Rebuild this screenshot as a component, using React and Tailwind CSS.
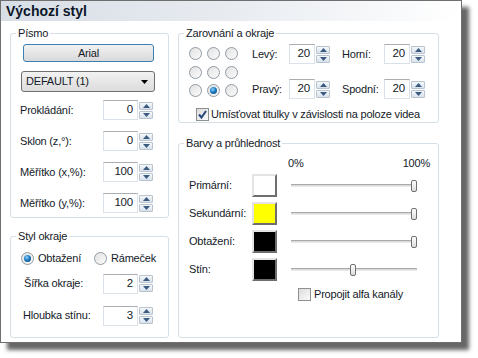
import React from "react";

const Group = ({ label, className, children }) => (
  <div className={`relative border border-[#d5dfe5] rounded-[3px] ${className}`}>
    <span className="absolute left-[5px] -top-[7px] px-[2px] bg-white leading-[13px]">{label}</span>
    {children}
  </div>
);

const ArrowBtn = ({ up }) => (
  <div className="h-[8px] w-[14px] border border-[#b9c3ce] rounded-[1px] bg-gradient-to-b from-[#f4f8fb] to-[#d8e2ec] flex items-center justify-center">
    <svg width="7" height="4" viewBox="0 0 7 4">
      {up ? <path d="M0 4 L3.5 0 L7 4 Z" fill="#3b5a80" /> : <path d="M0 0 L3.5 4 L7 0 Z" fill="#3b5a80" />}
    </svg>
  </div>
);

const Spinner = ({ value, fieldClass }) => (
  <div className="flex h-[20px]">
    <div className={`${fieldClass} h-full border border-[#dbe1e8] border-t-[#abadb3] bg-white flex items-center justify-end pr-[4px] text-[11.5px]`}>
      {value}
    </div>
    <div className="flex flex-col justify-center gap-[1px] ml-[1px]">
      <ArrowBtn up />
      <ArrowBtn />
    </div>
  </div>
);

const Radio = ({ checked }) => (
  <div className="w-[13px] h-[13px] rounded-full border border-[#8f9aa4] bg-gradient-to-br from-[#e2e2e2] to-[#fbfbfb] flex items-center justify-center shrink-0">
    {checked && (
      <div className="w-[7px] h-[7px] rounded-full bg-[radial-gradient(circle_at_40%_35%,#8fd3ff_0%,#1b7bc0_45%,#0a3d78_100%)]" />
    )}
  </div>
);

const Checkbox = ({ checked }) => (
  <div className="w-[13px] h-[13px] border border-[#8e8f8f] bg-gradient-to-br from-[#dcdcdc] to-[#fbfbfb] flex items-center justify-center shrink-0">
    {checked && (
      <svg width="9" height="9" viewBox="0 0 9 9">
        <path d="M1 4.5 L3.5 7.5 L8 1" stroke="#25467c" strokeWidth="2" fill="none" />
      </svg>
    )}
  </div>
);

const Swatch = ({ color }) => (
  <div
    className={`w-[25px] h-[23px] border-2 border-t-[#e4e4e4] border-l-[#e4e4e4] border-r-[#6e6e6e] border-b-[#6e6e6e] ${color}`}
  />
);

const Slider = ({ pct }) => (
  <div className="relative w-[126px] h-[12px] flex items-center">
    <div className="w-full h-[3px] border-t border-[#a8a8a8] border-b border-b-[#e8e8e8] bg-[#dcdcdc]" />
    <div
      className="absolute top-0 w-[6px] h-[12px] rounded-[2px] border border-[#707070] bg-gradient-to-b from-white to-[#dcdcdc]"
      style={{ left: `${pct * 120}px` }}
    />
  </div>
);

const FontRow = ({ label, value }) => (
  <div className="flex items-center ml-[9px]">
    <span className="w-[83px]">{label}</span>
    <Spinner value={value} fieldClass="w-[35px]" />
  </div>
);

const ColorRow = ({ label, color, pct }) => (
  <div className="flex items-center ml-[10px] h-[23px]">
    <span className="w-[63px]">{label}</span>
    <Swatch color={color} />
    <div className="ml-[14px]">
      <Slider pct={pct} />
    </div>
  </div>
);

export default function App() {
  return (
    <div className="w-[478px] h-[358px] bg-white font-['Liberation_Sans',Arial,sans-serif] text-[11px] tracking-[-0.2px] text-[#141a28]">
      <div className="w-[462px] h-[343px] border border-[#6f6f6f] bg-white shadow-[7px_7px_4px_rgba(0,0,0,0.6)] flex flex-col">
        <div className="h-[20px] shrink-0 bg-gradient-to-r from-[#d8dee6] via-[#e8ecf1] to-white pl-[5px] flex items-center font-bold text-[14px] tracking-normal text-[#0b1628]">
          Výchozí styl
        </div>
        <div className="flex gap-[9px] pl-[9px] pt-[12px]">
          {/* left column */}
          <div className="w-[159px] flex flex-col">
            <Group label="Písmo" className="h-[185px]">
              <div className="flex flex-col pt-[10px]">
                <div className="ml-[12px] w-[131px] h-[18px] rounded-[3px] border border-[#3c7fb1] bg-gradient-to-b from-[#f2f2f2] to-[#d9d9d9] flex items-center justify-center">
                  Arial
                </div>
                <div className="mt-[9px] ml-[10px] w-[134px] h-[21px] rounded-[3px] border border-[#707070] bg-gradient-to-b from-[#f2f2f2] to-[#dcdcdc] flex items-center justify-between pl-[4px] pr-[6px]">
                  <span>DEFAULT (1)</span>
                  <svg width="7" height="4" viewBox="0 0 7 4">
                    <path d="M0 0 L7 0 L3.5 4 Z" fill="#000" />
                  </svg>
                </div>
                <div className="mt-[8px] flex flex-col gap-[11px]">
                  <FontRow label="Prokládání:" value="0" />
                  <FontRow label="Sklon (z,°):" value="0" />
                  <FontRow label="Měřítko (x,%):" value="100" />
                  <FontRow label="Měřítko (y,%):" value="100" />
                </div>
              </div>
            </Group>
            <Group label="Styl okraje" className="mt-[18px] h-[102px]">
              <div className="flex flex-col pt-[13px]">
                <div className="flex items-center ml-[10px]">
                  <Radio checked />
                  <span className="ml-[4px] w-[56px]">Obtažení</span>
                  <Radio />
                  <span className="ml-[4px]">Rámeček</span>
                </div>
                <div className="mt-[7px] flex items-center ml-[13px]">
                  <span className="w-[79px]">Šířka okraje:</span>
                  <Spinner value="2" fieldClass="w-[35px]" />
                </div>
                <div className="mt-[12px] flex items-center ml-[12px]">
                  <span className="w-[80px]">Hloubka stínu:</span>
                  <Spinner value="3" fieldClass="w-[35px]" />
                </div>
              </div>
            </Group>
          </div>

          {/* right column */}
          <div className="w-[261px] flex flex-col">
            <Group label="Zarovnání a okraje" className="h-[90px]">
              <div className="flex flex-col pt-[13px]">
                <div className="flex ml-[10px]">
                  <div className="grid grid-cols-3 gap-x-[5px] gap-y-[4px]">
                    <Radio /><Radio /><Radio />
                    <Radio /><Radio /><Radio />
                    <Radio /><Radio checked /><Radio />
                  </div>
                  <div className="ml-[14px] -mt-[3px] flex flex-col gap-[15px]">
                    <div className="flex items-center">
                      <span className="w-[37px]">Levý:</span>
                      <Spinner value="20" fieldClass="w-[26px]" />
                      <span className="ml-[12px] w-[42px]">Horní:</span>
                      <Spinner value="20" fieldClass="w-[26px]" />
                    </div>
                    <div className="flex items-center">
                      <span className="w-[37px]">Pravý:</span>
                      <Spinner value="20" fieldClass="w-[26px]" />
                      <span className="ml-[12px] w-[42px]">Spodní:</span>
                      <Spinner value="20" fieldClass="w-[26px]" />
                    </div>
                  </div>
                </div>
                <div className="mt-[7px] ml-[17px] flex items-center">
                  <Checkbox checked />
                  <span className="ml-[2px]">Umísťovat titulky v závislosti na poloze videa</span>
                </div>
              </div>
            </Group>
            <Group label="Barvy a průhlednost" className="mt-[20px] h-[195px]">
              <div className="flex flex-col pt-[13px]">
                <div className="flex ml-[109px] w-[142px] justify-between leading-[12px]">
                  <span>0%</span>
                  <span>100%</span>
                </div>
                <div className="mt-[5px] flex flex-col gap-[5px]">
                  <ColorRow label="Primární:" color="bg-white" pct={1} />
                  <ColorRow label="Sekundární:" color="bg-[#ffff00]" pct={1} />
                  <ColorRow label="Obtažení:" color="bg-black" pct={1} />
                  <ColorRow label="Stín:" color="bg-black" pct={0.49} />
                </div>
                <div className="mt-[5px] ml-[119px] flex items-center">
                  <Checkbox />
                  <span className="ml-[3px]">Propojit alfa kanály</span>
                </div>
              </div>
            </Group>
          </div>
        </div>
      </div>
    </div>
  );
}
